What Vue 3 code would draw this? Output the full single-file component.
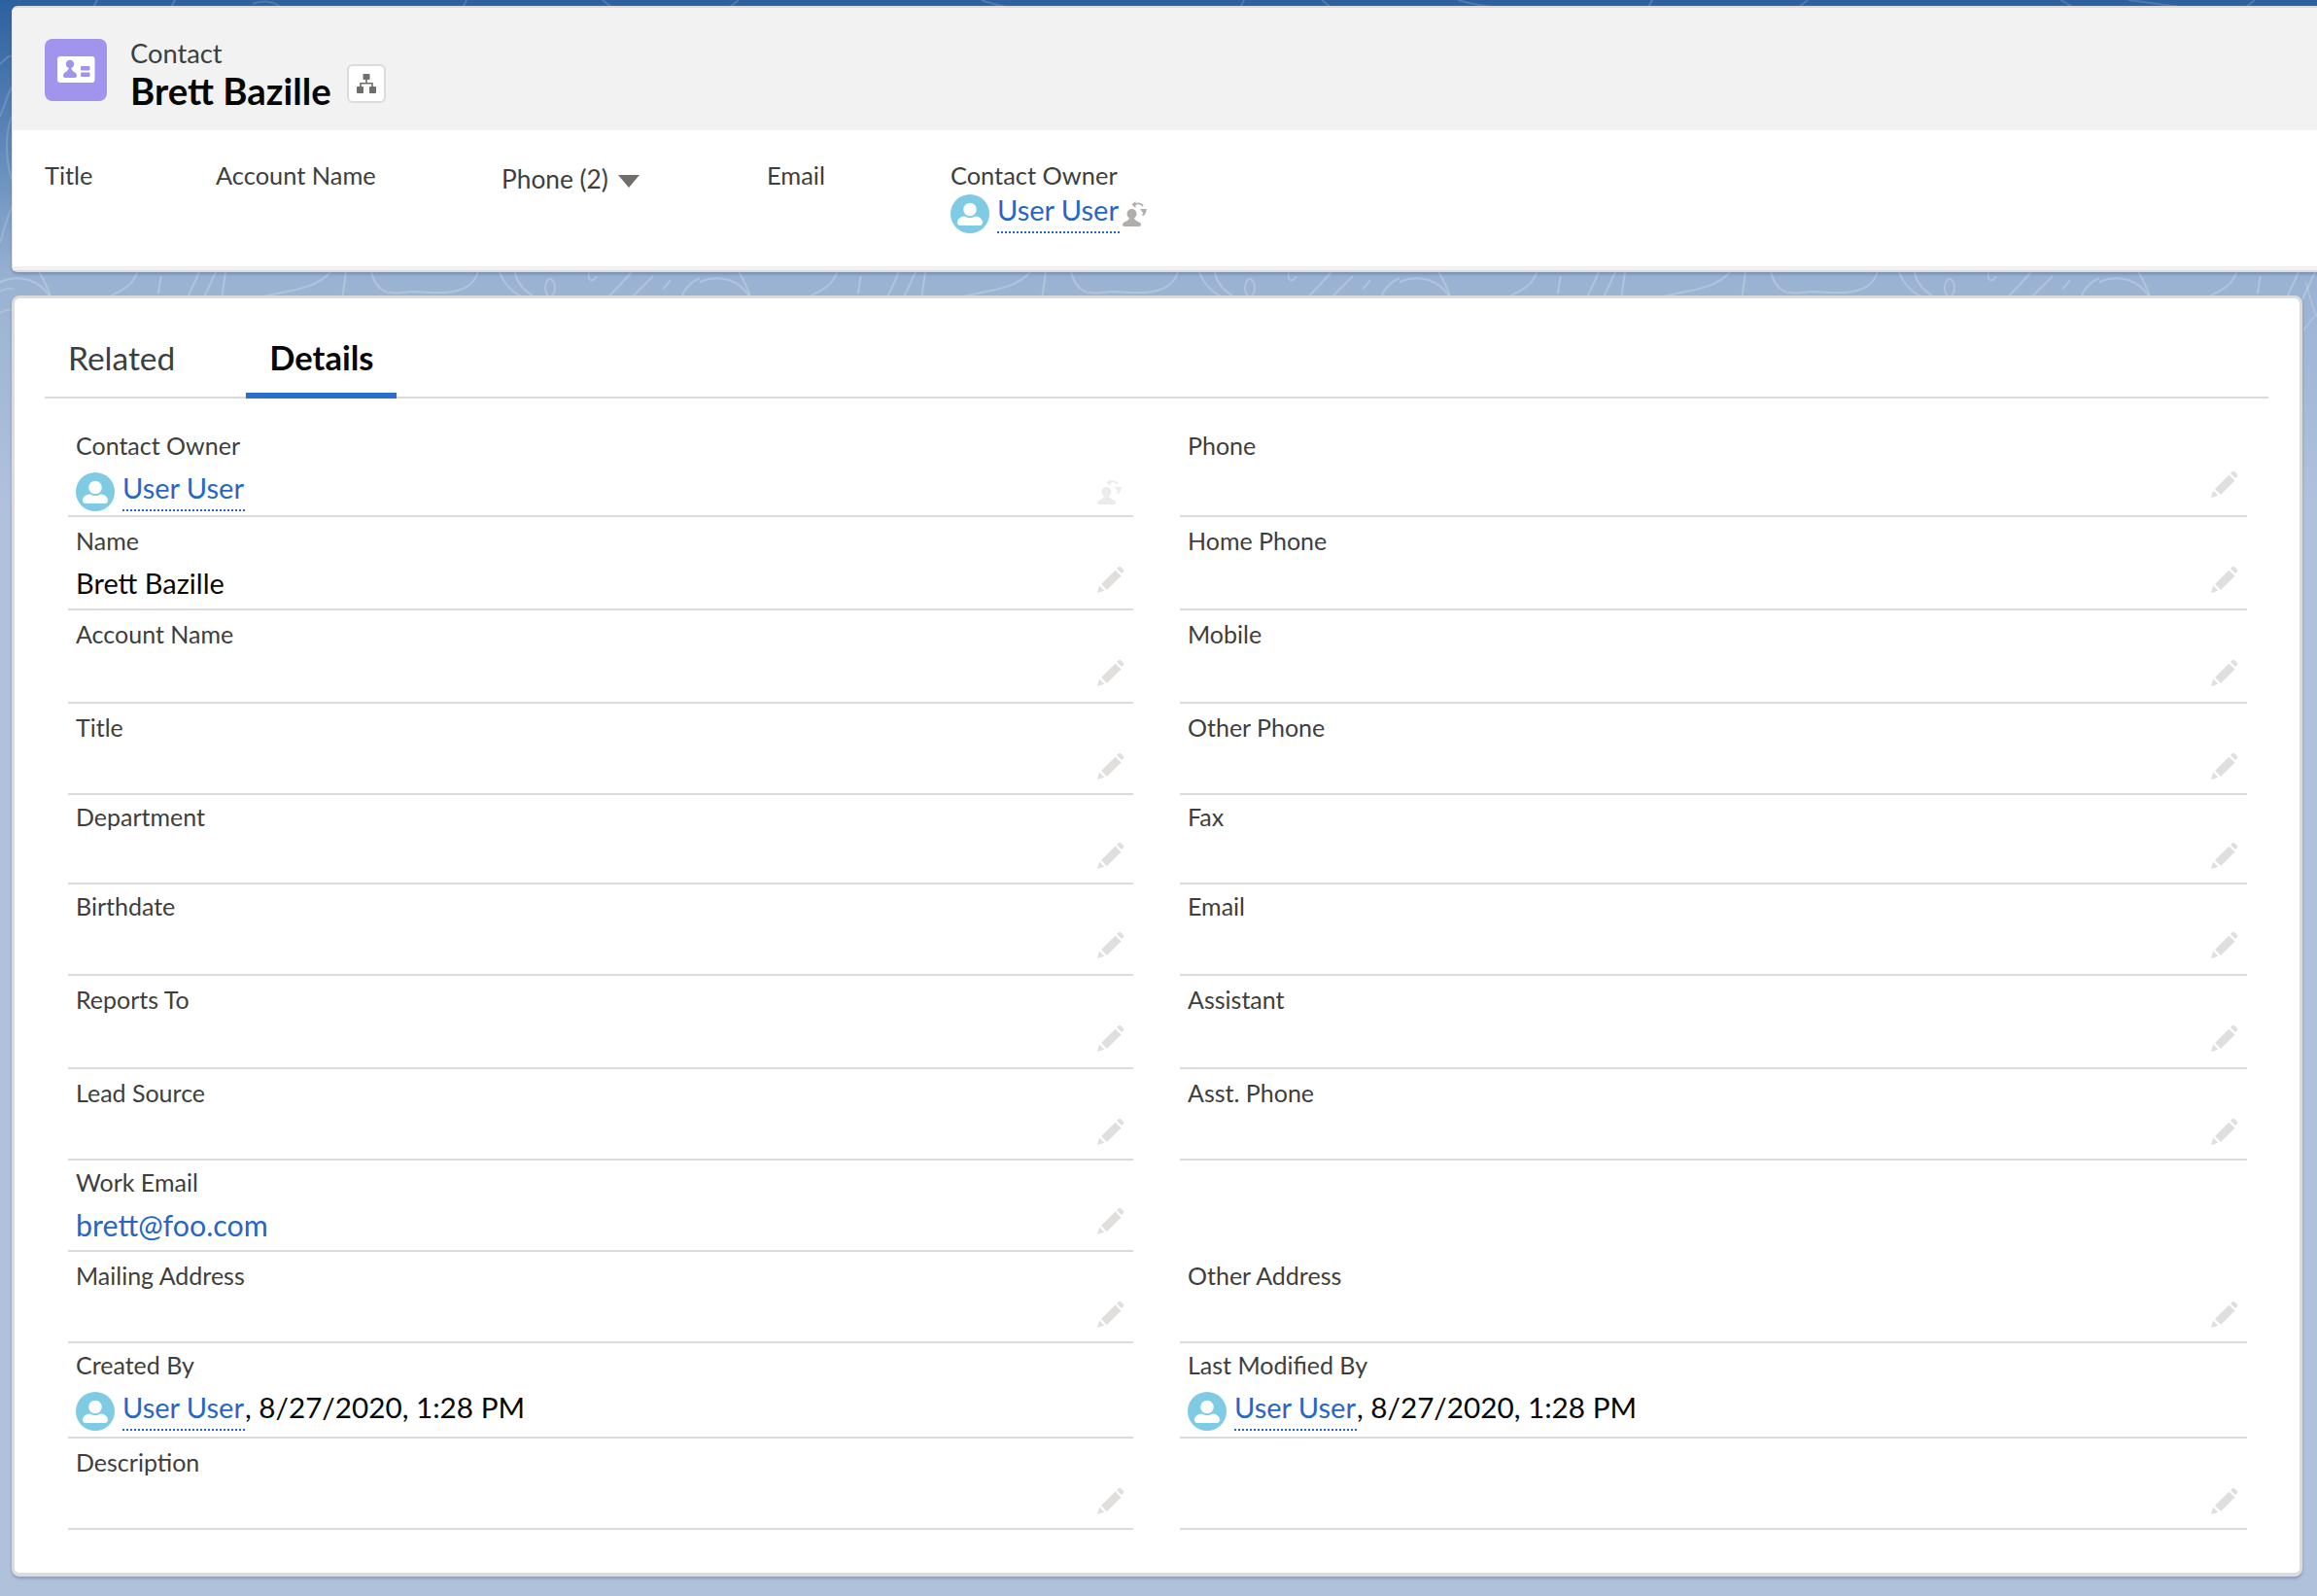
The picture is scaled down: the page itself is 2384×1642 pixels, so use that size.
<script setup>
const me = 'User User'
const stamp = ', 8/27/2020, 1:28 PM'
const rows = [
  { h: 98, l: { label: 'Contact Owner', user: true, icon: 'swap' }, r: { label: 'Phone' } },
  { h: 96, l: { label: 'Name', text: 'Brett Bazille' }, r: { label: 'Home Phone' } },
  { h: 96, l: { label: 'Account Name' }, r: { label: 'Mobile' } },
  { h: 92, l: { label: 'Title' }, r: { label: 'Other Phone' } },
  { h: 92, l: { label: 'Department' }, r: { label: 'Fax' } },
  { h: 96, l: { label: 'Birthdate' }, r: { label: 'Email' } },
  { h: 96, l: { label: 'Reports To' }, r: { label: 'Assistant' } },
  { h: 92, l: { label: 'Lead Source' }, r: { label: 'Asst. Phone' } },
  { h: 96, l: { label: 'Work Email', mail: 'brett@foo.com' }, r: null },
  { h: 92, l: { label: 'Mailing Address' }, r: { label: 'Other Address' } },
  { h: 100, l: { label: 'Created By', user: true, text: stamp, icon: 'none' }, r: { label: 'Last Modified By', user: true, text: stamp, icon: 'none' } },
  { h: 92, l: { label: 'Description' }, r: { label: '', icon: 'pencil' } },
]
function cells(row) {
  return [row.l, row.r]
}
</script>

<template>
  <div class="page">
    <svg class="contours" width="2384" height="1642" aria-hidden="true">
      <defs>
        <pattern id="band" x="0" y="276" width="720" height="32" patternUnits="userSpaceOnUse">
          <g fill="none" stroke="#fff" stroke-opacity=".22" stroke-width="2">
            <path d="M-4 16C20 4 42 12 53 32" />
            <path d="M38 0C44 10 50 22 53 32" />
            <path d="M141 4C136 20 122 24 107 32" />
            <path d="M166 8C164 14 164 20 163 26" />
            <path d="M205 4L192 32M222 4L209 32M232 4L228 32" />
            <path d="M260 32C292 22 322 24 340 4" />
            <path d="M356 4L352 32" />
            <path d="M382 4C390 34 412 24 424 24C470 28 486 22 492 4" />
            <path d="M514 4C520 20 532 28 544 32M530 4C532 16 540 24 554 32" />
            <ellipse cx="566" cy="20" rx="5" ry="9" />
            <path d="M606 4C604 12 610 16 614 8" />
            <path d="M650 4L624 32M672 8L648 32M690 12L682 22" />
            <path d="M700 32C708 10 730 2 750 12" />
          </g>
        </pattern>
      </defs>
      <rect x="0" y="276" width="2384" height="32" fill="url(#band)" />
      <g fill="none" stroke="#fff" stroke-opacity=".16" stroke-width="2">
        <path d="M0 66C6 60 10 56 12 58M0 120C8 100 10 90 14 88M12 120C4 140 6 170 14 190" />
        <path d="M0 250C6 230 10 214 14 210M0 300C6 296 10 296 14 298M0 322C6 318 10 318 14 320" />
        <path d="M100 0L96 8M180 0L176 8M260 4C270 0 280 0 290 8M480 0L476 8M620 0L630 8M760 0L750 8M1010 0C1020 4 1030 6 1040 8M1280 0L1276 8M1360 0L1370 8M1500 0C1520 6 1530 6 1540 8M1700 0L1696 8M1860 0L1850 8M2120 0L2134 8M2190 0L2250 8M2320 0L2310 8" />
        <path d="M2372 290C2376 300 2380 320 2384 326M2370 340L2384 322" />
      </g>
    </svg>

    <div class="content">
      <section class="highlights">
        <header class="hl-head">
          <div class="obj-icon">
            <svg viewBox="0 0 64 64" width="64" height="64">
              <rect x="13" y="18" width="38.5" height="27" rx="3" fill="#fff" />
              <circle cx="26" cy="26" r="4.2" fill="#a094ed" />
              <path d="M26 30c-2 0-2 2.500-3.500 3.500-1.800 1.200-3.500 2-3.500 4.500 0 1.200.8 2 2 2h10c1.200 0 2-.8 2-2 0-2.500-1.700-3.300-3.500-4.500-1.500-1-1.500-3.500-3.500-3.500z" fill="#a094ed" />
              <rect x="37" y="28" width="9.500" height="4.500" rx="1" fill="#a094ed" />
              <rect x="37" y="34.500" width="9.500" height="4.500" rx="1" fill="#a094ed" />
            </svg>
          </div>
          <div class="hl-titles">
            <div class="hl-type">Contact</div>
            <div class="hl-name">
              <h1>Brett Bazille</h1>
              <span class="tree-btn">
                <svg viewBox="0 0 20 20" width="20" height="20">
                  <g fill="#706e6b">
                    <rect x="6.500" y="0" width="7" height="6" rx=".8" />
                    <rect x="0" y="13" width="7" height="7" rx=".8" />
                    <rect x="13" y="13" width="7" height="7" rx=".8" />
                    <path d="M9.200 6h1.600v3h6v4h-1.600v-2.400H4.800V13H3.200V9h6z" />
                  </g>
                </svg>
              </span>
            </div>
          </div>
        </header>
        <div class="hl-fields">
          <div class="hl-label">Title</div>
          <div class="hl-label">Account Name</div>
          <div class="hl-label hl-phone">Phone (2)<i class="caret"></i></div>
          <div class="hl-label">Email</div>
          <div class="hl-owner">
            <div class="hl-label">Contact Owner</div>
            <div class="hl-user">
              <svg class="avatar" viewBox="0 0 40 40" width="40" height="40">
                <circle cx="20" cy="20" r="20" fill="#7fcbe3" />
                <circle cx="20" cy="15.500" r="6.800" fill="#fff" />
                <path d="M7 29c0-4 3.500-6.500 8-6.500 1.500 1 3 1.500 5 1.500s3.500-.5 5-1.500c4.500 0 8 2.500 8 6.500 0 2-1.500 3-3 3H10c-1.500 0-3-1-3-3z" fill="#fff" />
              </svg>
              <a class="user-link">{{ me }}</a>
              <svg class="swap" viewBox="0 0 26 26" width="26" height="26">
                <g fill="#b0adab">
                  <circle cx="9.500" cy="13" r="5" />
                  <path d="M7 17h5c.5 2 1 2.500 3 3.500 2 1 4 1.500 4 3.500 0 1.300-.7 2-2 2H2c-1.300 0-2-.7-2-2 0-2 2-2.500 4-3.500 2-1 2.500-1.500 3-3.500z" />
                </g>
                <g fill="none" stroke="#b0adab" stroke-width="1.800">
                  <path d="M12 4C15 1.500 19 2 21 5" />
                  <path d="M23.500 8c.3 3-.8 5-3 6.500" />
                </g>
                <path d="M13.500 0v7l-4-3.500zM18 8h7l-3.500 4.500z" fill="#b0adab" />
              </svg>
            </div>
          </div>
        </div>
      </section>

      <section class="detail">
        <nav class="tabs">
          <span class="tab">Related</span>
          <span class="tab tab-on">Details</span>
        </nav>
        <div class="form">
          <div v-for="(row, i) in rows" :key="i" class="row" :style="{ height: row.h + 'px' }">
            <div v-for="(c, j) in cells(row)" :key="j" class="cell" :class="{ blank: !c }">
              <template v-if="c">
                <div class="f-label">{{ c.label }}</div>
                <div class="f-value">
                  <template v-if="c.user">
                    <svg class="avatar" viewBox="0 0 40 40" width="40" height="40">
                      <circle cx="20" cy="20" r="20" fill="#7fcbe3" />
                      <circle cx="20" cy="15.500" r="6.800" fill="#fff" />
                      <path d="M7 29c0-4 3.500-6.500 8-6.500 1.500 1 3 1.500 5 1.500s3.500-.5 5-1.500c4.500 0 8 2.500 8 6.500 0 2-1.500 3-3 3H10c-1.500 0-3-1-3-3z" fill="#fff" />
                    </svg>
                    <a class="user-link">{{ me }}</a>
                  </template>
                  <a v-if="c.mail" class="mail">{{ c.mail }}</a>
                  <span v-if="c.text" class="plain" :class="{ stamp: c.user }">{{ c.text }}</span>
                </div>
                <svg v-if="c.icon === 'swap'" class="swap-edit" viewBox="0 0 26 26" width="26" height="26">
                  <g fill="#ecebea">
                    <circle cx="9.500" cy="13" r="5" />
                    <path d="M7 17h5c.5 2 1 2.500 3 3.500 2 1 4 1.500 4 3.500 0 1.300-.7 2-2 2H2c-1.300 0-2-.7-2-2 0-2 2-2.500 4-3.500 2-1 2.500-1.500 3-3.500z" />
                  </g>
                  <g fill="none" stroke="#ecebea" stroke-width="1.800">
                    <path d="M12 4C15 1.500 19 2 21 5" />
                    <path d="M23.500 8c.3 3-.8 5-3 6.500" />
                  </g>
                  <path d="M13.500 0v7l-4-3.500zM18 8h7l-3.500 4.500z" fill="#ecebea" />
                </svg>
                <svg v-else-if="c.icon !== 'none'" class="edit" viewBox="0 0 28 28" width="28" height="28">
                  <g fill="#e0dfde">
                    <path d="M0 28l2.200-7.300 5.100 5.100z" />
                    <path d="M4 19L18.500 4.500l6 6L10 25z" />
                    <path d="M20 3l1.600-1.600c.8-.8 2-.8 2.800 0l2.200 2.200c.8.800.8 2 0 2.800L25 8z" />
                  </g>
                </svg>
              </template>
            </div>
          </div>
        </div>
      </section>
    </div>
  </div>
</template>

<style>
html, body { margin: 0; padding: 0; }
</style>

<style scoped>
.page {
  position: relative;
  width: 2384px;
  height: 1642px;
  overflow: hidden;
  background: linear-gradient(#2c609f 0, #5f88b9 150px, #9ab3d3 290px, #b0c1dc 520px);
  font-family: "Lato", "Open Sans", sans-serif;
  color: #3e3e3c;
}
.contours { position: absolute; left: 0; top: 0; }
.content { position: relative; padding: 6px 0 0 12px; }

.highlights {
  height: 274px;
  margin-right: -40px;
  border-top: 2px solid #dddbda;
  border-bottom: 2px solid #dddbda;
  border-left: 1px solid #e4e4e4;
  border-radius: 6px 0 0 6px;
  background: #fff;
  box-shadow: 0 2px 3px rgba(60, 80, 110, .35);
  box-sizing: border-box;
}
.hl-head {
  display: flex;
  height: 126px;
  padding: 32px 0 0 33px;
  box-sizing: border-box;
  background: #f2f2f2;
  border-radius: 4px 0 0 0;
}
.obj-icon {
  width: 64px;
  height: 64px;
  border-radius: 8px;
  background: #a094ed;
  flex: none;
}
.hl-titles { margin-left: 24px; }
.hl-type { height: 30px; font-size: 27.300px; line-height: 30px; }
.hl-name { display: flex; align-items: flex-start; }
.hl-name h1 {
  margin: 0;
  font-size: 38.400px;
  line-height: 46px;
  font-weight: 700;
  color: #080707;
}
.tree-btn {
  width: 40px;
  height: 40px;
  margin: -4px 0 0 16px;
  display: flex;
  align-items: center;
  justify-content: center;
  box-sizing: border-box;
  border: 2px solid #dddbda;
  border-radius: 6px;
  background: #fff;
}
.hl-fields {
  display: grid;
  grid-template-columns: 176px 294px 273px 189px 1fr;
  height: 144px;
  box-sizing: border-box;
  padding: 30px 0 0 33px;
  border-bottom: 4px solid #f0f0f0;
  align-items: start;
}
.hl-label { font-size: 25.400px; line-height: 32px; white-space: nowrap; }
.hl-phone { padding-top: 4px; display: flex; align-items: center; font-size: 26.300px; }
.caret {
  width: 0;
  height: 0;
  margin: 4px 0 0 10px;
  border-left: 11px solid transparent;
  border-right: 11px solid transparent;
  border-top: 13px solid #706e6b;
}
.hl-user { display: flex; align-items: flex-start; margin-top: 4px; position: relative; }
.avatar { flex: none; display: block; }
.user-link {
  margin-left: 8px;
  padding: 0 1px 0 0;
  height: 40px;
  box-sizing: border-box;
  font-size: 29px;
  line-height: 32px;
  color: #2567c4;
  white-space: nowrap;
  border-bottom: 2px dotted #2567c4;
}
.swap { margin: 7px 0 0 3px; flex: none; }

.detail {
  margin-top: 24px;
  width: 2357px;
  height: 1318px;
  box-sizing: border-box;
  padding: 0 32px;
  border: 3px solid #dcdcdc;
  border-bottom-width: 4px;
  border-radius: 8px;
  background: #fff;
  box-shadow: 0 2px 3px rgba(60, 80, 110, .35);
}
.tabs {
  display: flex;
  height: 103px;
  box-sizing: border-box;
  border-bottom: 2px solid #dddbda;
  margin-left: -1px;
  padding-top: 37px;
}
.tab {
  padding: 0 24px;
  font-size: 33.500px;
  line-height: 48px;
  margin-right: 49px;
  color: #3e3e3c;
  height: 65px;
  box-sizing: border-box;
}
.tab-on {
  margin-right: 0;
  font-size: 34.500px;
  font-weight: 700;
  color: #080707;
  border-bottom: 6px solid #2a6fcc;
  height: 66px;
}
.form { padding: 24px 0 0 23px; }
.row { display: grid; grid-template-columns: 1096px 1098px; column-gap: 48px; }
.cell {
  position: relative;
  box-sizing: border-box;
  padding: 8px 8px 0;
  border-bottom: 2px solid #dddbda;
}
.cell.blank { border-bottom: 0; }
.f-label { font-size: 25px; line-height: 32px; height: 32px; }
.f-value {
  display: flex;
  align-items: flex-start;
  margin-top: 12px;
  height: 40px;
  font-size: 29px;
  line-height: 32px;
  color: #080707;
  white-space: nowrap;
}
.stamp { font-size: 29.700px; }
.mail { color: #2567c4; font-size: 30.400px; }
.edit { position: absolute; right: 9px; top: 50px; }
.swap-edit { position: absolute; right: 11px; top: 59px; }
</style>
